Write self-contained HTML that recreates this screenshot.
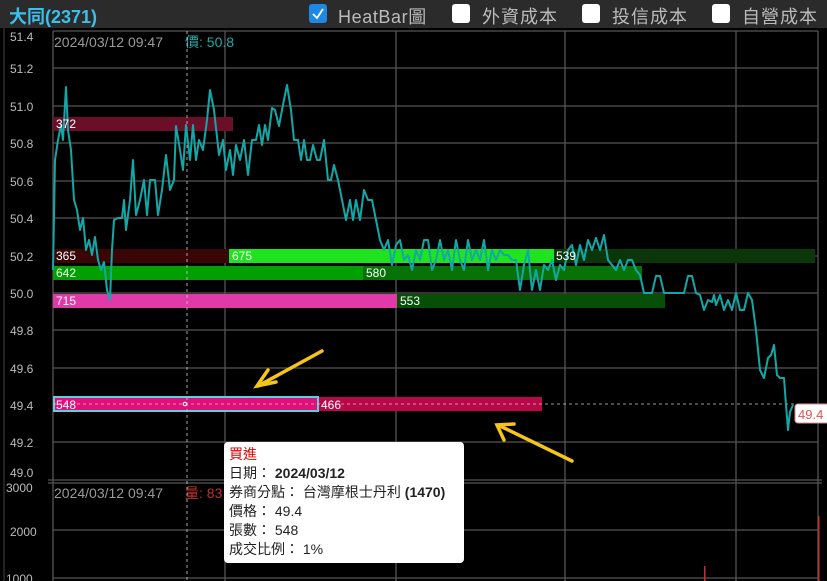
<!DOCTYPE html>
<html><head><meta charset="utf-8"><style>
html,body{margin:0;padding:0;width:827px;height:581px;overflow:hidden;background:#000;font-family:"Liberation Sans","Noto Sans CJK TC",sans-serif}
.hdr{position:absolute;left:0;top:0;width:827px;height:28px;background:#2b2b2b}
.t{position:absolute;white-space:nowrap}
.cb{position:absolute;top:4px;width:18px;height:19px;background:#fff;border-radius:3px}
.tip{position:absolute;left:224px;top:442px;width:240px;height:121px;background:#fff;border-radius:4px;font-size:14px;color:#222;line-height:19px;padding:3px 0 0 5px;box-sizing:border-box}
</style></head><body>
<div class="hdr">
<div class="t" style="left:9px;top:3px;font-size:18px;font-weight:bold;color:#3cc0ea">大同(2371)</div>
<div class="cb" style="left:309px;background:#1e88e5;"><svg width="18" height="19"><path d="M4 10 L8 14 L14 5" stroke="#fff" stroke-width="1.8" fill="none"/></svg></div>
<div class="t" style="left:338px;top:3px;font-size:18px;color:#bbb;letter-spacing:0.6px">HeatBar圖</div>
<div class="cb" style="left:452px"></div>
<div class="t" style="left:482px;top:3px;font-size:18px;color:#bbb;letter-spacing:1px">外資成本</div>
<div class="cb" style="left:582px"></div>
<div class="t" style="left:612px;top:3px;font-size:18px;color:#bbb;letter-spacing:1px">投信成本</div>
<div class="cb" style="left:712px"></div>
<div class="t" style="left:742px;top:3px;font-size:18px;color:#bbb;letter-spacing:1px">自營成本</div>
</div>
<svg style="position:absolute;left:0;top:28px" width="827" height="553" viewBox="0 28 827 553" font-family="Liberation Sans, sans-serif">
<g stroke="#555" stroke-width="1.3">
<line x1="53" y1="31" x2="818" y2="31"/>
<line x1="53" y1="68" x2="818" y2="68"/><line x1="53" y1="106" x2="818" y2="106"/>
<line x1="53" y1="143" x2="818" y2="143"/><line x1="53" y1="181" x2="818" y2="181"/>
<line x1="53" y1="218" x2="818" y2="218"/><line x1="53" y1="256" x2="818" y2="256"/>
<line x1="53" y1="293" x2="818" y2="293"/><line x1="53" y1="330" x2="818" y2="330"/>
<line x1="53" y1="368" x2="818" y2="368"/><line x1="53" y1="442" x2="818" y2="442"/>
<line x1="48" y1="480" x2="822" y2="480"/><line x1="48" y1="483" x2="822" y2="483"/>
<line x1="53" y1="530" x2="818" y2="530"/><line x1="53" y1="578" x2="818" y2="578"/>
<line x1="53" y1="31" x2="53" y2="581"/><line x1="225" y1="31" x2="225" y2="581"/>
<line x1="396" y1="31" x2="396" y2="581"/><line x1="565" y1="31" x2="565" y2="581"/>
<line x1="736" y1="31" x2="736" y2="581"/><line x1="818" y1="31" x2="818" y2="581"/>
</g>
<line x1="4" y1="28" x2="4" y2="581" stroke="#444"/>
<g fill="#bbb" font-size="12">
<text x="10" y="41">51.4</text><text x="10" y="73">51.2</text><text x="10" y="111">51.0</text>
<text x="10" y="148">50.8</text><text x="10" y="186">50.6</text><text x="10" y="223">50.4</text>
<text x="10" y="261">50.2</text><text x="10" y="298">50.0</text><text x="10" y="335">49.8</text>
<text x="10" y="373">49.6</text><text x="10" y="410">49.4</text><text x="10" y="447">49.2</text>
<text x="10" y="477">49.0</text>
<text x="6" y="492">3000</text><text x="10" y="536">2000</text><text x="6" y="583">1000</text>
</g>
<text x="54" y="47" fill="#999" font-size="14">2024/03/12 09:47</text>
<text x="185" y="47" fill="#22aaaa" font-size="14">價: 50.8</text>
<text x="54" y="498" fill="#999" font-size="14">2024/03/12 09:47</text>
<text x="185" y="498" fill="#c03030" font-size="14">量: 83</text>
<g>
<rect x="53" y="117" width="180" height="14" fill="#6b0f28"/>
<rect x="53" y="249" width="176" height="14" fill="#3a0505"/>
<rect x="229" y="249" width="325" height="14" fill="#1ee31e"/>
<rect x="554" y="249" width="261" height="14" fill="#0a360a"/>
<rect x="53" y="266" width="310" height="14" fill="#00a000"/>
<rect x="363" y="266" width="279" height="14" fill="#077307"/>
<rect x="53" y="294" width="344" height="14" fill="#e03aa8"/>
<rect x="397" y="294" width="268" height="14" fill="#064f06"/>
<rect x="318" y="397" width="224" height="14" fill="#b80848"/>
<rect x="54" y="397" width="264" height="14" fill="#e0107a" stroke="#5ad0e0" stroke-width="2"/>
</g>
<line x1="187" y1="31" x2="187" y2="581" stroke="#ccc" stroke-dasharray="3,3" stroke-width="0.8"/>
<line x1="53" y1="404" x2="795" y2="404" stroke="#ccc" stroke-dasharray="3,3" stroke-width="0.8"/>
<polyline fill="none" stroke="#13a8a8" stroke-width="2" stroke-linejoin="round" points="53,270 55,160 58,140 61,125 63,140 66,87 68,130 71,150 74,200 77,210 80,230 83,218 86,250 89,240 92,255 95,237 98,260 101,270 104,262 107,290 110,300 112,250 114,220 118,218 122,218 124,200 126,230 130,200 133,160 136,215 140,200 144,180 147,215 150,180 155,180 158,215 162,190 166,155 170,190 174,180 176,126 180,150 183,170 186,125 190,160 193,125 196,160 199,140 203,150 207,120 210,90 214,110 219,155 223,140 226,170 230,150 233,175 236,145 240,160 244,140 248,175 252,140 256,140 259,125 262,145 265,125 268,140 272,108 275,110 279,126 282,110 287,85 291,110 294,140 298,140 301,160 304,140 307,160 310,160 313,145 317,160 320,160 324,140 328,180 331,180 334,165 338,180 342,200 346,220 350,200 353,220 356,200 360,220 364,190 368,200 372,200 376,220 380,240 384,250 388,240 392,265 396,245 400,240 404,260 408,255 412,270 416,250 420,260 424,240 428,240 432,270 436,260 440,240 444,260 448,250 452,270 456,240 460,260 464,270 468,240 472,260 476,250 480,260 484,240 488,270 492,250 496,260 500,250 504,255 508,255 512,260 516,260 520,290 524,265 528,250 532,290 536,270 540,290 544,265 548,270 552,260 556,280 560,265 564,270 568,250 572,245 576,265 580,245 584,260 588,240 592,250 596,238 600,250 604,235 608,260 612,265 616,270 620,260 624,270 628,260 632,260 636,270 640,275 644,293 648,293 652,293 656,276 660,276 664,293 668,293 672,293 676,293 680,293 684,293 688,276 692,276 696,293 700,295 704,310 708,300 712,302 714,295 716,305 720,295 724,310 728,300 732,310 736,293 740,310 744,310 748,293 752,300 756,330 760,370 764,378 768,358 771,355 774,345 777,375 780,378 784,378 786,405 788,430 790,412 793,405"/>
<g stroke="#f5c518" stroke-width="3.5" stroke-linecap="round" fill="none">
<line x1="322" y1="351" x2="258" y2="386"/><path d="M268 370 L257 386 L276 382"/>
<line x1="572" y1="461" x2="498" y2="425"/><path d="M504 440 L497 425 L514 424"/>
</g>
<rect x="795" y="404" width="34" height="19" rx="3" fill="#fff" stroke="#e88"/>
<text x="798" y="419" fill="#e05050" font-size="13">49.4</text>
<g fill="#fff" font-size="12">
<text x="56" y="128">372</text><text x="56" y="260">365</text><text x="232" y="260">675</text>
<text x="556" y="260">539</text><text x="56" y="277">642</text><text x="366" y="277">580</text>
<text x="56" y="305">715</text><text x="400" y="305">553</text><text x="56" y="409">548</text>
<text x="321" y="409">466</text>
</g>
<circle cx="185" cy="404" r="1.8" fill="none" stroke="#fff"/>
<rect x="704" y="566" width="1.5" height="15" fill="#c03030"/>
<rect x="818" y="516" width="1.5" height="65" fill="#c03030"/>
</svg>
<div class="tip">
<div style="color:#d00">買進</div>
<div>日期： <b>2024/03/12</b></div>
<div>券商分點： 台灣摩根士丹利 <b>(1470)</b></div>
<div>價格： 49.4</div>
<div>張數： 548</div>
<div>成交比例： 1%</div>
</div>
</body></html>
